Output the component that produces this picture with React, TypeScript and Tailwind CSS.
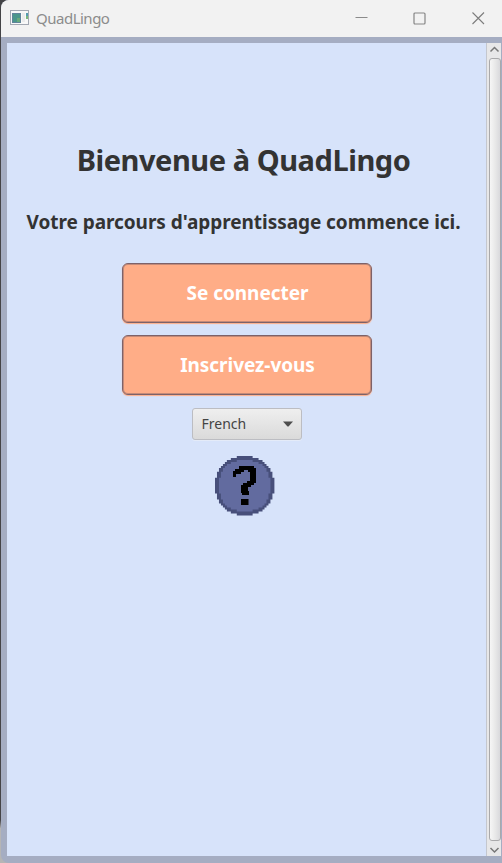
import React from "react";

function TitleBar() {
  return (
    <header className="flex h-[37px] shrink-0 items-center bg-[#f2f2f2] pl-[9px] text-[#8c8c8c]">
      <svg width="19" height="15" viewBox="0 0 19 15" shapeRendering="crispEdges" className="mb-[2px]">
        <rect x="0.5" y="0.5" width="18" height="14" fill="#f8f8f8" stroke="#a3a8b2" />
        <rect x="2" y="3" width="9" height="10" fill="#60849a" />
        <rect x="3" y="4" width="7" height="8" fill="#4b968b" />
        <rect x="7" y="8" width="3" height="4" fill="#68aa7b" />
        <rect x="12" y="3" width="3" height="9" fill="#ececec" />
        <rect x="16" y="3" width="2" height="3" fill="#539cb0" />
        <rect x="16" y="6" width="2" height="3" fill="#7ab77b" />
      </svg>
      <span className="mb-px ml-[7px] text-[15px] leading-5 tracking-[-0.5px]">QuadLingo</span>
      <div className="ml-auto flex items-center pr-[17px] pb-px">
        <svg width="13" height="13" viewBox="0 0 13 13" className="mr-[45px]">
          <path d="M0.5 5.5H12.5" stroke="#8b8b8b" />
        </svg>
        <svg width="13" height="13" viewBox="0 0 13 13" className="mr-[46px]">
          <rect x="1" y="1" width="11" height="11" rx="1" fill="none" stroke="#858585" strokeWidth="1.2" />
        </svg>
        <svg width="13" height="13" viewBox="0 0 13 13">
          <path d="M0.5 0.5L12 12M12 0.5L0.5 12" stroke="#7c7c7c" strokeWidth="1.1" />
        </svg>
      </div>
    </header>
  );
}

function ActionButton({ children }: { children: React.ReactNode }) {
  return (
    <button className="flex h-[60px] w-[250px] items-center justify-center rounded-[6px] border border-[#7d6269] bg-[#ffad87] pt-px pl-[2px] text-[19px] font-bold tracking-[-0.05px] text-white shadow-[0_1px_1px_#ffad87,inset_0_0_0_1px_#c48a78]">
      {children}
    </button>
  );
}

function HelpIcon() {
  return (
    <svg width="60" height="60" viewBox="0 0 60 60">
      <g transform="scale(1.98)">
        <path
          fill="#474f7a"
          d="M11 0h8v1h3v1h2v1h1v1h1v1h1v1h1v2h1v3h1v8h-1v3h-1v2h-1v1h-1v1h-1v1h-1v1h-2v1h-3v1h-8v-1h-3v-1h-2v-1h-1v-1h-1v-1h-1v-1h-1v-2h-1v-3h-1v-8h1v-3h1v-2h1v-1h1v-1h1v-1h1v-1h2v-1h3z"
        />
        <path
          fill="#626b9f"
          d="M11 2h8v1h3v1h2v1h1v1h1v2h1v3h1v8h-1v3h-1v2h-1v1h-1v1h-2v1h-3v1h-8v-1h-3v-1h-2v-1h-1v-1h-1v-2h-1v-3h-1v-8h1v-3h1v-2h1v-1h1v-1h2v-1h3z"
        />
      </g>
      <path
        fill="#000"
        d="M24 10H39V12H41V27H39V29H36V31H33V35H34V39H27V37H26V29H28V27H32V25H35V16H33V14H29V16H26V18H21V21H18V15H20V13H24ZM26 43H33.5V49H26Z"
      />
    </svg>
  );
}

function Scrollbar() {
  return (
    <div className="flex w-[15px] flex-col items-center border-l border-[#c4c7ce] bg-[#e7e7e8]">
      <svg width="13" height="15" viewBox="0 0 13 15" className="shrink-0">
        <path d="M2.5 8.5L6.5 4.5L10.5 8.5" fill="none" stroke="#777" strokeWidth="1.5" />
      </svg>
      <div className="ml-px w-[12px] flex-1 rounded-[3px] border border-[#a9a9ab] bg-linear-to-r from-[#f6f6f6] via-[#e9e9e9] to-[#d9d9dc]" />
      <svg width="13" height="15" viewBox="0 0 13 15" className="shrink-0">
        <path d="M2.5 7L6.5 11L10.5 7" fill="none" stroke="#777" strokeWidth="1.5" />
      </svg>
    </div>
  );
}

export default function App() {
  return (
    <div className="h-[863px] w-[502px] overflow-hidden bg-linear-to-b from-[#444447] from-95% to-[#b5b5b5] to-96% pl-px font-['Noto_Sans','Open_Sans',sans-serif]">
      <div className="flex h-full flex-col overflow-hidden rounded-tl-[8px] rounded-bl-[8px] bg-[#a5adc2]">
        <TitleBar />
        <div className="flex min-h-0 flex-1 pt-[6px] pr-px pb-[7px] pl-[6px]">
          <main className="flex flex-1 flex-col items-center bg-[#d7e3fa] pt-[94px] text-[#333]">
            <h1 className="mr-[6px] h-[46px] text-[29px] leading-[46px] font-bold tracking-[-0.45px] whitespace-nowrap">
              Bienvenue à QuadLingo
            </h1>
            <p className="mt-[24px] mr-[6px] h-[30px] text-[19px] leading-[30px] font-bold tracking-[-0.05px] whitespace-nowrap">
              Votre parcours d'apprentissage commence ici.
            </p>
            <div className="mt-[26px] flex flex-col gap-[12px]">
              <ActionButton>Se connecter</ActionButton>
              <ActionButton>Inscrivez-vous</ActionButton>
            </div>
            <div className="mt-[13px] flex h-[32px] w-[110px] items-center justify-between rounded-[3px] border border-[#bcbdc2] bg-linear-to-b from-[#efefef] to-[#dadada] pr-[8px] pl-[9px] text-[14px] text-[#444] shadow-[0_1px_0_#e4ebf8]">
              <span className="mb-px">French</span>
              <svg width="10" height="6" viewBox="0 0 10 6">
                <path d="M0 0.5H10L5.5 5.5H4.5Z" fill="#4d4d4d" />
              </svg>
            </div>
            <div className="mt-[16px] mr-[4px]">
              <HelpIcon />
            </div>
          </main>
          <Scrollbar />
        </div>
      </div>
    </div>
  );
}
